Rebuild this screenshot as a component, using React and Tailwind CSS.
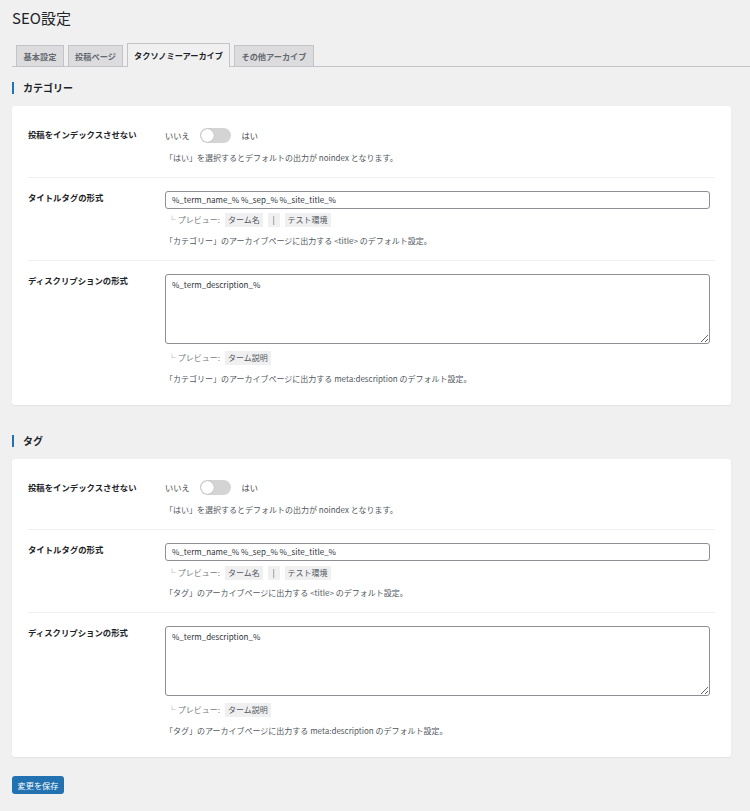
import React from 'react';

const font = { fontFamily: '"Noto Sans CJK JP", "Noto Sans", sans-serif' };

const tabs = [
    { label: '基本設定', w: 'w-[48px]' },
    { label: '投稿ページ', w: 'w-[55px]' },
    { label: 'タクソノミーアーカイブ', w: 'w-[103px]', active: true },
    { label: 'その他アーカイブ', w: 'w-[80px]' },
];

const Chip = ({ children }) => (
    <span className="inline-flex h-[14px] items-center bg-[#f0f0f1] px-[3px] text-[8px] text-[#50575e]">
        {children}
    </span>
);

const Row = ({ label, children, last }) => (
    <div className={"flex py-[13px]" + (last ? "" : " border-b border-[#f0f0f1]")}>
        <div className="w-[137px] shrink-0 text-[8.4px] font-bold leading-[12px] text-[#1d2327]">{label}</div>
        <div className="flex-1 pr-[5px]">{children}</div>
    </div>
);

const Help = ({ children }) => (
    <p className="text-[8px] leading-[12px] text-[#50575e]">{children}</p>
);

const Section = ({ title, name }) => (
    <div>
        {/* heading with blue bar */}
        <div className="flex h-[12px] items-center gap-[9px]">
            <span className="h-[12px] w-[2px] bg-[#2271b1]" />
            <h2 className="text-[10px] font-bold leading-[12px] text-[#1d2327]">{title}</h2>
        </div>

        <div className="mt-[12px] rounded-[3px] bg-white px-[16px] pt-[9px] pb-[7px] shadow-[0_1px_2px_rgba(0,0,0,0.06)]">
            <Row label="投稿をインデックスさせない">
                <div className="flex h-[14px] items-center text-[8.2px] text-[#3c434a]">
                    <span>いいえ</span>
                    <span className="ml-[10px] flex h-[15px] w-[31px] items-center rounded-full bg-[#d4d4d4] px-[1px]">
                        <span className="h-[13px] w-[13px] rounded-full bg-white shadow-[0_0_1px_rgba(0,0,0,0.4)]" />
                    </span>
                    <span className="ml-[11px]">はい</span>
                </div>
                <div className="mt-[9.5px]">
                    <Help>「はい」を選択するとデフォルトの出力が noindex となります。</Help>
                </div>
            </Row>

            <Row label="タイトルタグの形式">
                <div className="flex h-[18px] items-center rounded-[3px] border border-[#8c8f94] px-[6px] text-[8px] text-[#2c3338]">
                    %_term_name_% %_sep_% %_site_title_%
                </div>
                <div className="mt-[4.5px] flex items-center gap-[5px] pl-[3px] text-[8px] text-[#787c82]">
                    <span>└ プレビュー:</span>
                    <Chip>ターム名</Chip>
                    <Chip>&nbsp;|&nbsp;</Chip>
                    <Chip>テスト環境</Chip>
                </div>
                <div className="mt-[7.5px]">
                    <Help>「{name}」のアーカイブページに出力する &lt;title&gt; のデフォルト設定。</Help>
                </div>
            </Row>

            <Row label="ディスクリプションの形式" last>
                <textarea
                    readOnly
                    value="%_term_description_%"
                    style={font}
                    className="block h-[70px] w-full rounded-[3px] border border-[#8c8f94] px-[6px] py-[4px] text-[8px] leading-[12px] text-[#2c3338] outline-none"
                />
                <div className="mt-[7px] flex items-center gap-[5px] pl-[3px] text-[8px] text-[#787c82]">
                    <span>└ プレビュー:</span>
                    <Chip>ターム説明</Chip>
                </div>
                <div className="mt-[8px]">
                    <Help>「{name}」のアーカイブページに出力する meta:description のデフォルト設定。</Help>
                </div>
            </Row>
        </div>
    </div>
);

export default function App() {
    return (
        <div style={font} className="min-h-[811px] w-[750px] bg-[#f0f0f1] pb-[16px]">
            <h1 className="px-[12px] pt-[9px] text-[15px] leading-[18px] text-[#1d2327]">SEO設定</h1>

            {/* Tabs */}
            <div className="ml-[12px] mt-[17px] flex h-[23px] items-end gap-[4px] border-b border-[#c3c4c7] pl-[4px]">
                {tabs.map((t) =>
                    t.active ? (
                        <div
                            key={t.label}
                            className={"-mb-px flex h-[24px] items-center justify-center border border-b-0 border-[#c3c4c7] bg-[#f0f0f1] text-[8.2px] font-bold text-[#1d2327] " + t.w}
                        >
                            {t.label}
                        </div>
                    ) : (
                        <div
                            key={t.label}
                            className={"flex h-[21px] items-center justify-center border border-b-0 border-[#c3c4c7] bg-[#dcdcde] text-[8.2px] font-bold text-[#646970] " + t.w}
                        >
                            {t.label}
                        </div>
                    )
                )}
            </div>

            <div className="px-[12px] pr-[19px]">
                <div className="mt-[15px]">
                    <Section title="カテゴリー" name="カテゴリー" />
                </div>
                <div className="mt-[30px]">
                    <Section title="タグ" name="タグ" />
                </div>

                <button className="mt-[19px] flex h-[18px] w-[52px] items-center justify-center rounded-[3px] bg-[#2271b1] text-[8.2px] text-white">
                    変更を保存
                </button>
            </div>
        </div>
    );
}
